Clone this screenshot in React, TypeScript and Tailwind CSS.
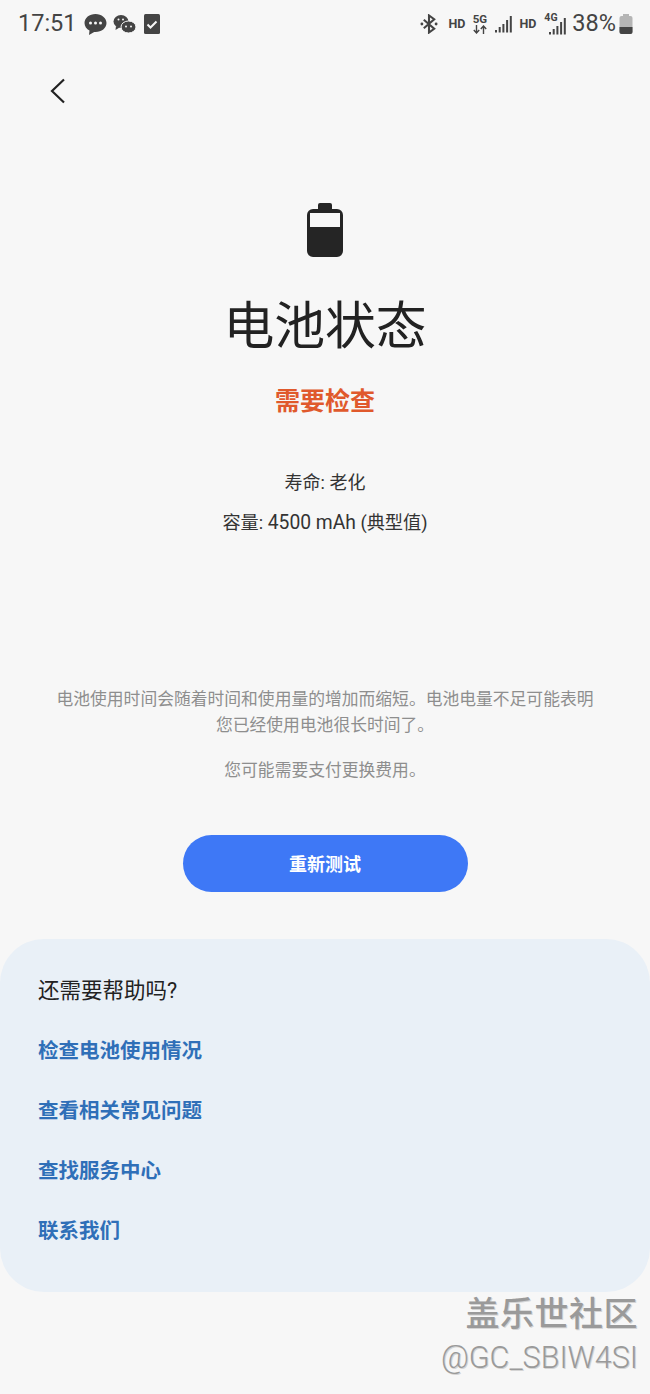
const cjk = "font-['Roboto','Noto_Sans_CJK_SC',sans-serif]";

function ChatIcon() {
  return (
    <svg width="23" height="23" viewBox="0 0 23 23">
      <path d="M11.500 1C5.400 1 .5 4.900.5 10c0 3.300 2 6 5 7.500L5 22l5.200-3.100c.4 0 .9.100 1.300.100 6.100 0 11-4 11-9s-4.900-9-11-9z" fill="#444" />
      <circle cx="6.500" cy="10" r="1.500" fill="#f7f7f7" />
      <circle cx="11.500" cy="10" r="1.500" fill="#f7f7f7" />
      <circle cx="16.500" cy="10" r="1.500" fill="#f7f7f7" />
    </svg>
  );
}

function WeChatIcon() {
  return (
    <svg width="23" height="20" viewBox="0 0 23 20">
      <ellipse cx="8" cy="7.500" rx="7.500" ry="6.500" fill="#444" />
      <path d="M3 12l-.5 4 4-2.500z" fill="#444" />
      <ellipse cx="15.500" cy="13" rx="7.500" ry="6" fill="#444" stroke="#f7f7f7" strokeWidth="1" />
      <circle cx="5.500" cy="5.500" r="1" fill="#f7f7f7" />
      <circle cx="10" cy="5.500" r="1" fill="#f7f7f7" />
      <circle cx="13" cy="12.500" r="1" fill="#f7f7f7" />
      <circle cx="18" cy="12.500" r="1" fill="#f7f7f7" />
    </svg>
  );
}

function TaskIcon() {
  return (
    <svg width="16" height="20" viewBox="0 0 16 20">
      <rect width="16" height="20" rx="1.500" fill="#444" />
      <path d="M3.500 10.500l3 3 6-6" fill="none" stroke="#f7f7f7" strokeWidth="2" />
    </svg>
  );
}

function BluetoothIcon() {
  return (
    <svg width="18" height="20" viewBox="0 0 19 20">
      <path d="M4 5.500l11 9.500-5.500 4V1l5.500 4L4 14.500" fill="none" stroke="#444" strokeWidth="2.200" />
      <circle cx="2" cy="10" r="1.500" fill="#444" />
      <circle cx="17" cy="10" r="1.500" fill="#444" />
    </svg>
  );
}

function SignalBars() {
  return (
    <svg width="17" height="18" viewBox="0 0 17 18">
      <rect x="0" y="15" width="2" height="2.500" fill="#444" />
      <rect x="3.700" y="12" width="2" height="5.500" fill="#444" />
      <rect x="7.400" y="9" width="2" height="8.500" fill="#444" />
      <rect x="11.100" y="5" width="2" height="12.500" fill="#444" />
      <rect x="14.800" y="1" width="2" height="16.500" fill="#444" />
    </svg>
  );
}

function ArrowsDownUp() {
  return (
    <svg width="14" height="9" viewBox="0 0 14 9">
      <path d="M3.500 0v8M.8 5l2.700 3 2.700-3M10.500 9V1M7.800 4l2.700-3 2.700 3" fill="none" stroke="#444" strokeWidth="1.400" />
    </svg>
  );
}

function StatusBattery() {
  return (
    <svg width="14" height="20" viewBox="0 0 14 20">
      <rect x="4" y="0" width="6" height="3" fill="#b5b5b5" />
      <rect x="0.500" y="2" width="13" height="18" rx="2" fill="#b5b5b5" />
      <path d="M.5 13h13v5a2 2 0 0 1-2 2h-9a2 2 0 0 1-2-2z" fill="#444" />
    </svg>
  );
}

function BatteryIcon() {
  return (
    <svg width="36" height="54" viewBox="0 0 36 54">
      <path d="M13 0h10a2 2 0 0 1 2 2v4h5a6 6 0 0 1 6 6v36a6 6 0 0 1-6 6H6a6 6 0 0 1-6-6V12a6 6 0 0 1 6-6h5V2a2 2 0 0 1 2-2z" fill="#252525" />
      <rect x="3" y="10" width="30" height="14" fill="#f7f7f7" />
    </svg>
  );
}

function StatusBar() {
  return (
    <div className="h-12 flex items-center justify-between pl-[18px] pr-[17px] text-[#444]">
      <div className="flex items-center">
        <span className="text-[23.500px] font-['Roboto',sans-serif] mr-[7px]">17:51</span>
        <ChatIcon />
        <span className="ml-[6px]"><WeChatIcon /></span>
        <span className="ml-[8px]"><TaskIcon /></span>
      </div>
      <div className="flex items-center font-['Roboto',sans-serif]">
        <BluetoothIcon />
        <span className="ml-[10px] text-[12.500px] font-bold">HD</span>
        <span className="ml-[7px] w-[15px] flex flex-col items-center text-[11.500px] font-bold leading-[11px]">
          5G
          <ArrowsDownUp />
        </span>
        <span className="ml-[8px]"><SignalBars /></span>
        <span className="ml-[7px] text-[12.500px] font-bold">HD</span>
        <span className="relative ml-[8px] w-[22px] h-[22px] flex items-end justify-end">
          <SignalBars />
          <span className="absolute left-0 top-0 text-[10.500px] font-bold leading-[10px]">4G</span>
        </span>
        <span className="ml-[6px] text-[23.500px]">38%</span>
        <span className="ml-[3px]"><StatusBattery /></span>
      </div>
    </div>
  );
}

export default function App() {
  return (
    <div className={`relative w-[650px] h-[1394px] overflow-hidden bg-[#f7f7f7] ${cjk}`}>
      <StatusBar />

      <div className="pl-[50px] pt-[30px] h-[155px]">
        <svg width="16" height="26" viewBox="0 0 16 26">
          <path d="M14 1.500L2 13l12 11.500" fill="none" stroke="#222" strokeWidth="2.200" />
        </svg>
      </div>

      <div className="flex flex-col items-center">
        <BatteryIcon />
        <h1 className="mt-[37px] text-[50.800px] leading-[66px] text-[#222]">电池状态</h1>
        <p className="mt-[25px] text-[25px] leading-[34px] font-bold text-[#e0592c]">需要检查</p>
        <p className="mt-[51px] text-[18px] leading-[26px] text-[#333]">寿命: 老化</p>
        <p className="mt-[14px] text-[18.200px] leading-[26px] text-[#333]">
          容量: <span className="text-[19.300px]">4500 mAh</span> (典型值)
        </p>

        <div className="mt-[150px] text-center text-[16.800px] leading-[26px] text-[#8e8e8e]">
          <p>电池使用时间会随着时间和使用量的增加而缩短。电池电量不足可能表明</p>
          <p>您已经使用电池很长时间了。</p>
          <p className="mt-[19px]">您可能需要支付更换费用。</p>
        </div>

        <button className="mt-[52px] w-[285px] h-[57px] pt-[2px] rounded-full bg-[#3e78f6] text-white text-[18px] font-bold">
          重新测试
        </button>
      </div>

      <div className="mt-[47px] h-[353px] rounded-[44px] bg-[#e9f0f7] pl-[38px] pt-[37px] text-[20.500px] leading-[30px]">
        <p className="text-[#222] text-[21.500px]">还需要帮助吗?</p>
        <div className="mt-[30px] flex flex-col gap-[30px] font-bold text-[#2f6fb8]">
          <span>检查电池使用情况</span>
          <span>查看相关常见问题</span>
          <span>查找服务中心</span>
          <span>联系我们</span>
        </div>
      </div>

      <div className="absolute right-[12px] top-[1292px] text-right text-[#9a9a9a]">
        <p className="text-[34px] leading-[44px] font-medium tracking-[0.500px] [text-shadow:1px_1px_0_#d4d4d4]">盖乐世社区</p>
        <p className="mt-[4px] text-[30.500px] leading-[36px] font-['Roboto',sans-serif] font-light [text-shadow:1px_1px_0_#d4d4d4]">@GC_SBIW4SI</p>
      </div>
    </div>
  );
}
